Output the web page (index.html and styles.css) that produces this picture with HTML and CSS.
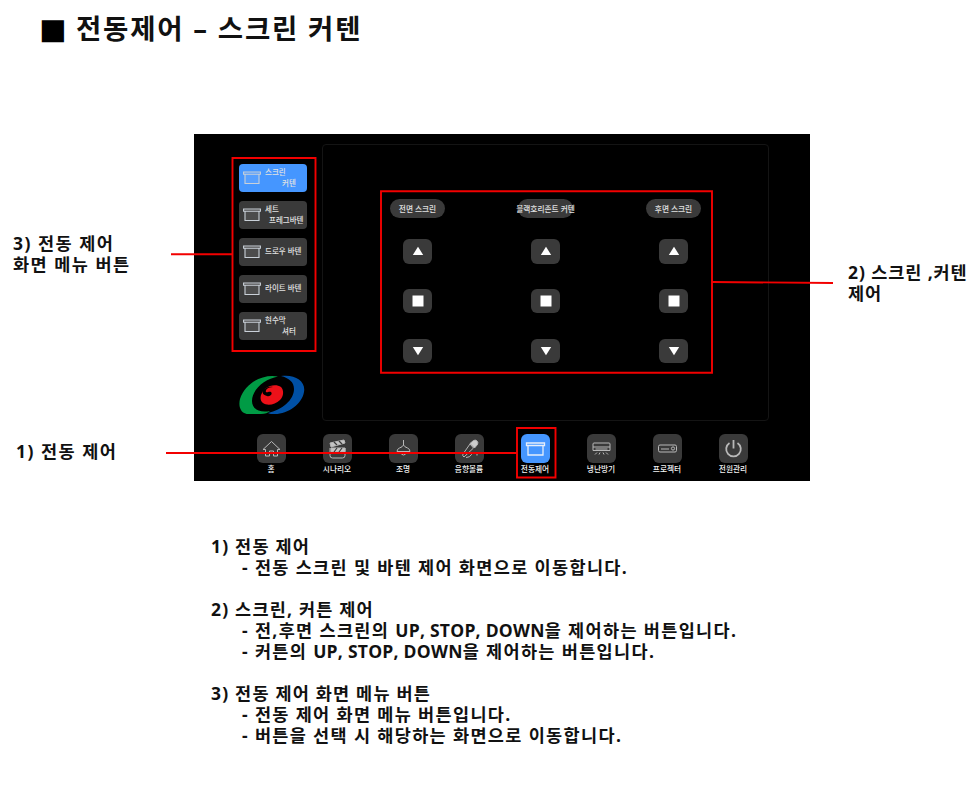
FILE: index.html
```html
<!DOCTYPE html>
<html lang="ko">
<head>
<meta charset="utf-8">
<title>전동제어 – 스크린 커텐</title>
<link rel="stylesheet" href="styles.css">
</head>
<body>
<svg class="defs" width="0" height="0">
  <symbol id="screen" viewBox="0 0 18 14"><path d="M.6 1h16.8v2.2H.6zM2 3.2v9.3h14V3.2" fill="#ffffff18" stroke="currentColor" stroke-width="1.1"/></symbol>
  <symbol id="up" viewBox="0 0 12 10"><path d="M6 .8l5.200 8.200H.8z" fill="#fff"/></symbol>
  <symbol id="stop" viewBox="0 0 12 12"><path d="M.5.5h11v11H.5z" fill="#fff"/></symbol>
  <symbol id="down" viewBox="0 0 12 10"><path d="M.8 1h10.400L6 9.200z" fill="#fff"/></symbol>
</svg>
<div class="page">
  <h1 class="title"><span class="mark">■</span><span>전동제어 – 스크린 커텐</span></h1>
  <div class="stage">
    <aside class="left">
      <p class="note note-menu">3) 전동 제어<br>화면 메뉴 버튼</p>
      <p class="note note-nav">1) 전동 제어</p>
    </aside>
    <main class="panel">
      <div class="upper">
        <div class="side">
          <button class="item active"><svg><use href="#screen"/></svg><span>스크린<b>커텐</b></span></button>
          <button class="item"><svg><use href="#screen"/></svg><span>세트<b class="wide">프레그바텐</b></span></button>
          <button class="item"><svg><use href="#screen"/></svg><span>드로우 바텐</span></button>
          <button class="item"><svg><use href="#screen"/></svg><span>라이트 바텐</span></button>
          <button class="item"><svg><use href="#screen"/></svg><span>현수막<b>셔터</b></span></button>
          <svg class="logo" viewBox="0 0 66 40">
            <path d="M39 1.500C24-1.500 6 8 1 24c-2 8 1 15 9 15h12c4 0 7-1 9-3-9 2-18-1-18-10C13 14 26 4 39 1.500z" fill="#009b45"/>
            <path d="M42 1c14-2 25 5 23 16-2 12-16 22-29 22-3 0-6 0-7-1 14-3 26-13 26-24 0-7-5-11-13-13z" fill="#0050a5"/>
            <path d="M27 13c4-3 11-4 15-1 3 3 3 9-1 13-5 5-13 6-17 3-3-2-3-7-1-10 1-2 2-4 4-5z" fill="#ed1119"/>
            <path d="M24 15c3-3 7-4 10-3-5 0-8 3-7 5 1 1 3-1 5 0 2 2-1 5-4 4-4-1-5-3-4-6z" fill="#000"/>
          </svg>
        </div>
        <section class="frame">
          <div class="column"><span class="pill">전면 스크린</span><button class="key"><svg><use href="#up"/></svg></button><button class="key"><svg><use href="#stop"/></svg></button><button class="key"><svg><use href="#down"/></svg></button></div>
          <div class="column"><span class="pill">블랙호리존트 커텐</span><button class="key"><svg><use href="#up"/></svg></button><button class="key"><svg><use href="#stop"/></svg></button><button class="key"><svg><use href="#down"/></svg></button></div>
          <div class="column"><span class="pill">후면 스크린</span><button class="key"><svg><use href="#up"/></svg></button><button class="key"><svg><use href="#stop"/></svg></button><button class="key"><svg><use href="#down"/></svg></button></div>
        </section>
      </div>
      <nav class="nav">
        <div class="tab"><i><svg viewBox="0 0 29 29"><path d="M6 15.500l8.500-8 8.500 8h-2.500V22h-4v-5h-4v5h-4v-6.500z"/></svg></i>홈</div>
        <div class="tab"><i><svg viewBox="0 0 29 29"><path d="M7 14v7.500q0 2.500 2.500 2.500h10q2.500 0 2.500-2.500V14"/><path d="M7 9l14-3 1 3-14 4z M8 14h14v3.500H8z" fill="#c4c4c4"/><path d="M11 8l3 3m2-4l3 3m-8 8l3-4m2 4l3-4" stroke="#3a3a3a" stroke-width="1.200"/></svg></i>시나리오</div>
        <div class="tab"><i><svg viewBox="0 0 29 29"><path d="M14.500 6v5q-1 2-4 3-2.500 1-2.500 3.500h13q0-2.500-2.500-3.500-3-1-4-3M12 18q0 3 2.500 3t2.500-3"/></svg></i>조명</div>
        <div class="tab"><i><svg viewBox="0 0 29 29"><path d="M15 9.500l3.500-3q2-1 3.500.5t.5 3.500l-3 3.500z" fill="#ccc"/><path d="M15 10L8 20q-1 2 1 3l9.500-9zM11 23.500q4 0 5.500-3t5.500-1v2"/></svg></i>음향볼륨</div>
        <div class="tab on"><i><svg viewBox="0 0 29 29"><path d="M5.500 9h18v2.500h-18zM7 11.500V21h15v-9.500"/></svg></i>전동제어</div>
        <div class="tab"><i><svg viewBox="0 0 29 29"><path d="M7 9h15q1 0 1 1v6.500H6V10q0-1 1-1zM6 13h17M8.500 15h12M10 18.500l-2 2m5-2l-1 2m4-2l1 2m2-2l2 2"/></svg></i>냉난방기</div>
        <div class="tab"><i><svg viewBox="0 0 29 29"><path d="M7 11h15q1.500 0 1.500 1.500v4q0 1.500-1.500 1.500H7q-1.500 0-1.500-1.500v-4Q5.500 11 7 11zM8 15h8"/><circle cx="20" cy="14.500" r="1.600"/></svg></i>프로젝터</div>
        <div class="tab"><i><svg viewBox="0 0 29 29"><path d="M14.500 6v8.500M10.500 9a7.300 7.300 0 1 0 8 0" stroke-width="1.800"/></svg></i>전원관리</div>
      </nav>
    </main>
    <p class="note note-right">2) 스크린 ,커텐<br>제어</p>
  </div>
  <div class="desc">
    <section><h2>1) 전동 제어</h2><p>- 전동 스크린 및 바텐 제어 화면으로 이동합니다.</p></section>
    <section><h2>2) 스크린, 커튼 제어</h2><p>- 전,후면 스크린의 <span class="en">UP, STOP, DOWN</span>을 제어하는 버튼입니다.</p><p>- 커튼의 <span class="en">UP, STOP, DOWN</span>을 제어하는 버튼입니다.</p></section>
    <section><h2>3) 전동 제어 화면 메뉴 버튼</h2><p>- 전동 제어 화면 메뉴 버튼입니다.</p><p>- 버튼을 선택 시 해당하는 화면으로 이동합니다.</p></section>
  </div>
  <svg class="callouts" viewBox="0 0 977 791">
    <path d="M232.500 158h83v193h-83zM381 191.200h331v181.600H381zM517 428h38.500v49.500H517z"/>
    <path d="M171 254.300h61.500M166 453h351M712 282l121 1"/>
  </svg>
</div>
</body>
</html>
```
FILE: styles.css
```css
* { box-sizing: border-box; }
body { margin: 0; background: #fff; color: #111; font-family: "Open Sans", "Noto Sans CJK KR", sans-serif; }
.defs { position: absolute; }
.page { position: relative; width: 977px; height: 791px; overflow: hidden; }
h1, h2, p { margin: 0; }
button { border: 0; padding: 0; font: inherit; color: inherit; }
.title { display: flex; align-items: center; height: 57px; margin-bottom: 77px; padding-left: 39px; font-size: 27.500px; line-height: 57px; font-weight: 700; letter-spacing: 1.800px; white-space: nowrap; }
.mark { width: 37px; font: 29px/58px "DejaVu Sans", sans-serif; color: #000; }
.stage { display: grid; grid-template-columns: 194px 616px 1fr; height: 347px; }
.note, .desc { font-size: 17.500px; line-height: 21px; font-weight: 700; letter-spacing: 1.350px; white-space: nowrap; }
.note { letter-spacing: 1.500px; }
.en { letter-spacing: .25px; }
.note-menu { padding: 99px 0 0 13px; }
.note-nav { padding: 166px 0 0 16px; }
.note-right { padding: 128px 0 0 38px; letter-spacing: .9px; }
.panel { background: #000; color: #e2e2e2; }
.upper { display: flex; height: 300px; padding: 10px 0 0 45px; }
.side { display: flex; flex-direction: column; gap: 8.500px; width: 83px; padding-top: 19.500px; }
.item { display: flex; align-items: center; gap: 4px; width: 68px; height: 28.500px; padding-left: 4px; border-radius: 4px; background: #3a3a3a; font-size: 7.500px; line-height: 11px; text-align: left; white-space: nowrap; font-weight: 500; }
.item.active { background: #4596ff; }
.item svg { width: 18px; height: 14px; flex: none; color: #c9d0d8; }
.item b { display: block; padding-left: 17px; font-weight: inherit; }
.item b.wide { padding-left: 4px; }
.logo { width: 66px; height: 40px; margin-top: 26px; }
.frame { display: flex; gap: 73px; width: 447px; height: 277px; padding: 54px 0 0 67px; border: 1px solid #141414; border-radius: 4px; }
.column { display: flex; flex-direction: column; align-items: center; width: 55px; }
.pill { display: flex; align-items: center; justify-content: center; width: 55px; height: 19px; margin-bottom: 21px; border-radius: 10px; background: #3a3a3a; font-size: 7.700px; font-weight: 500; white-space: nowrap; }
.key { display: flex; align-items: center; justify-content: center; width: 29px; height: 24.500px; flex: none; margin-bottom: 25.300px; border-radius: 6px; background: #3a3a3a; }
.key svg { width: 12px; height: 12px; }
.nav { display: flex; padding-left: 44px; }
.tab { display: flex; flex-direction: column; align-items: center; width: 66px; font-size: 7.700px; line-height: 12px; font-weight: 500; color: #f2f2f2; }
.tab i { width: 29px; height: 29px; border-radius: 6px; background: #3a3a3a; }
.tab svg { display: block; width: 29px; height: 29px; fill: none; stroke: #b8b8b8; stroke-width: 1; }
.tab.on i { background: #4596ff; }
.tab.on svg { stroke: #e6eefa; stroke-width: 1.300; }
.desc { display: grid; gap: 21px; padding: 55px 0 0 211px; }
.desc h2 { font: inherit; letter-spacing: 1.200px; }
.desc p { padding-left: 31px; }
.callouts { position: absolute; inset: 0; width: 977px; height: 791px; fill: none; stroke: #f20000; stroke-width: 1.900; pointer-events: none; }
```
